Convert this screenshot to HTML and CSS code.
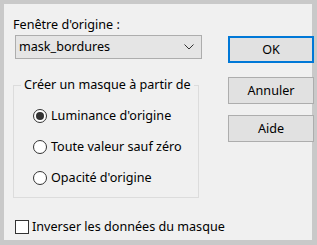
FILE: index.html
```html
<!DOCTYPE html>
<html>
<head>
<meta charset="utf-8">
<link rel="stylesheet" href="styles.css">
</head>
<body>
<div class="frame">
  <div class="panel">
    <div class="left">
      <div class="label">Fenêtre d'origine :</div>
      <div class="combo">
        <span class="combo-text">mask_bordures</span>
        <svg class="chev" width="10" height="6" viewBox="0 0 10 6"><path d="M0.5 0.5 L5 5 L9.5 0.5" fill="none" stroke="#333" stroke-width="1"/></svg>
      </div>
      <div class="group">
        <div class="legend">Créer un masque à partir de</div>
        <div class="radio-row"><span class="radio checked"></span><span>Luminance d'origine</span></div>
        <div class="radio-row"><span class="radio"></span><span>Toute valeur sauf zéro</span></div>
        <div class="radio-row"><span class="radio"></span><span>Opacité d'origine</span></div>
      </div>
      <div class="check-row"><span class="checkbox"></span><span>Inverser les données du masque</span></div>
    </div>
    <div class="right">
      <div class="btn default">OK</div>
      <div class="btn btn2">Annuler</div>
      <div class="btn btn3">Aide</div>
    </div>
  </div>
</div>
</body>
</html>
```
FILE: styles.css
```css
html, body {
  margin: 0;
  padding: 0;
}
body {
  font-family: "Noto Sans", "Open Sans", sans-serif;
  font-size: 12.6px;
  color: #000;
}
.frame {
  width: 317px;
  height: 245px;
  box-sizing: border-box;
  background: #c9c9c9;
  padding: 4px 5px 5px 4px;
}
.panel {
  width: 308px;
  height: 236px;
  background: #f0f0f0;
  display: flex;
}
.left {
  width: 198px;
  flex-shrink: 0;
  padding-left: 9px;
  display: flex;
  flex-direction: column;
  white-space: nowrap;
}
.label {
  margin-top: 13px;
  line-height: 16px;
  height: 16px;
}
.combo {
  margin-top: 2px;
  margin-left: 2px;
  width: 187px;
  height: 24px;
  box-sizing: border-box;
  background: #e5e5e5;
  border: 1px solid #adadad;
  display: flex;
  align-items: center;
  justify-content: space-between;
  padding: 0 7px 0 3px;
}
.combo-text {
  line-height: 16px;
}
.group {
  margin-top: 26px;
  width: 186px;
  height: 113px;
  box-sizing: border-box;
  border: 1px solid #dcdcdc;
  position: relative;
  padding: 22px 0 0 19px;
  display: flex;
  flex-direction: column;
  gap: 15px;
}
.legend {
  position: absolute;
  top: -9px;
  left: 7px;
  padding: 0 3px;
  background: #f0f0f0;
  line-height: 16px;
}
.radio-row {
  display: flex;
  align-items: center;
  gap: 4px;
  line-height: 16px;
  height: 16px;
}
.radio {
  flex-shrink: 0;
  width: 14px;
  height: 14px;
  box-sizing: border-box;
  border: 1px solid #333;
  border-radius: 50%;
  background: #fff;
  display: flex;
  align-items: center;
  justify-content: center;
}
.radio.checked::after {
  content: "";
  width: 8px;
  height: 8px;
  border-radius: 50%;
  background: #333;
}
.check-row {
  margin-top: 21px;
  margin-left: 2px;
  display: flex;
  align-items: center;
  gap: 3px;
  line-height: 16px;
}
.checkbox {
  flex-shrink: 0;
  width: 14px;
  height: 14px;
  box-sizing: border-box;
  border: 1px solid #333;
  background: #fff;
}
.right {
  margin-left: 17px;
  display: flex;
  flex-direction: column;
}
.btn {
  width: 86px;
  height: 27px;
  box-sizing: border-box;
  border: 1px solid #adadad;
  background: #e1e1e1;
  display: flex;
  align-items: center;
  justify-content: center;
  line-height: 16px;
}
.btn.default {
  margin-top: 32px;
  border: 2px solid #0078d7;
}
.btn2 {
  margin-top: 14px;
}
.btn3 {
  margin-top: 11px;
}
```
